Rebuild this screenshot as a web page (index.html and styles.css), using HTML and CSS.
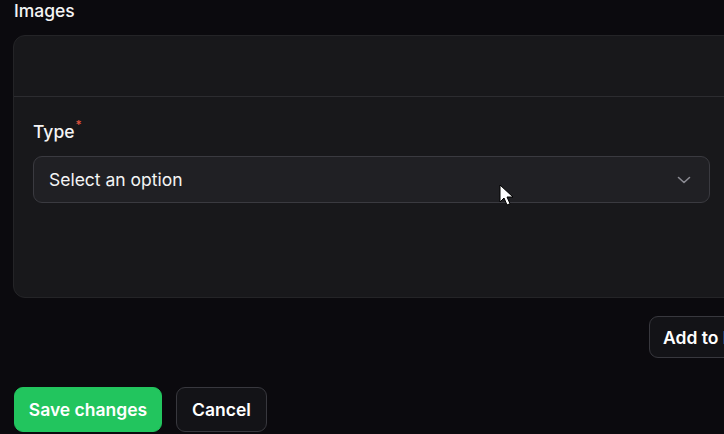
FILE: index.html
```html
<!DOCTYPE html>
<html>
<head>
<meta charset="utf-8">
<link rel="stylesheet" href="styles.css">
</head>
<body>
<div class="page">
  <div class="section-title">Images</div>
  <div class="card">
    <div class="card-head"></div>
    <div class="card-body">
      <div class="label">Type<span class="req">*</span></div>
      <div class="select">
        <span>Select an option</span>
        <svg class="chev" width="16" height="16" viewBox="0 0 16 16"><path d="M2.5 5.5l5.5 5 5.5-5" fill="none" stroke="#8b8b93" stroke-width="1.6" stroke-linecap="round" stroke-linejoin="round"/></svg>
      </div>
    </div>
  </div>
  <div class="add-row">
    <button class="btn btn-dark add">Add to Images</button>
  </div>
  <div class="actions">
    <button class="btn btn-green">Save changes</button>
    <button class="btn btn-dark">Cancel</button>
  </div>
</div>
<svg class="cursor" width="16" height="24" viewBox="0 0 16 24"><path d="M1 1v17l4-4 3 7 3-1.3-3-6.7h6z" fill="#fff" stroke="#000" stroke-width="1"/></svg>
</body>
</html>
```
FILE: styles.css
```css
html, body {
  margin: 0;
  padding: 0;
  background: #0b0a0e;
  overflow: hidden;
  font-family: Inter, "Noto Sans", sans-serif;
  color: #f4f4f5;
}
.page {
  width: 780px;
  padding: 0 0 0 13px;
}
.section-title {
  font-size: 17.5px;
  font-weight: 500;
  line-height: 22px;
  padding-left: 1px;
  margin-bottom: 13px;
}
.card {
  background: #18181b;
  border: 1px solid #242427;
  border-radius: 12px;
}
.card-head {
  height: 60px;
  border-bottom: 1px solid #2c2c30;
}
.card-body {
  padding: 24px 0 94px 19px;
}
.label {
  font-size: 17.5px;
  font-weight: 500;
  line-height: 22px;
  margin-bottom: 13px;
}
.req {
  color: #e0553f;
  font-size: 12px;
  vertical-align: top;
  position: relative;
  top: -7px;
  margin-left: 1px;
}
.select {
  display: flex;
  align-items: center;
  justify-content: space-between;
  padding: 0 17px 0 15px;
  box-sizing: border-box;
  width: 677px;
  height: 47px;
  border: 1px solid #3a3a40;
  border-radius: 9px;
  background: #202024;
  font-size: 17.5px;
  color: #f4f4f5;
}
.chev { display: block; }
.add-row {
  display: flex;
  padding: 18px 0 0 636px;
}
.btn {
  font-family: Inter, "Noto Sans", sans-serif;
  font-size: 17.5px;
  font-weight: 600;
  color: #fff;
  border-radius: 9px;
  cursor: pointer;
  white-space: nowrap;
}
.btn-dark {
  background: #131317;
  border: 1px solid #38383e;
  height: 42px;
  padding: 0 13px;
}
.add { height: 42px; }
.actions {
  display: flex;
  gap: 14px;
  padding: 29px 0 0 1px;
}
.actions .btn { height: 45px; }
.btn-green {
  background: #22c55e;
  border: 1px solid #22c55e;
  width: 148px;
  padding: 0;
}
.actions .btn-dark {
  width: 91px;
  padding: 0;
}
.cursor {
  position: absolute;
  left: 499px;
  top: 184px;
}
```
